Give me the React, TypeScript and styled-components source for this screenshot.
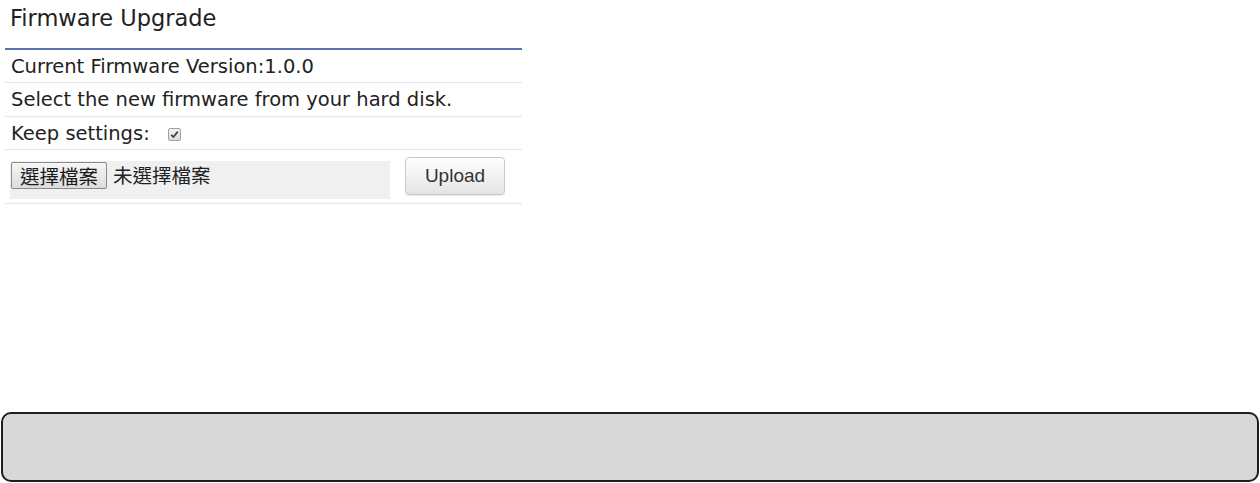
import React from "react";
import styled, { createGlobalStyle } from "styled-components";

const GlobalStyle = createGlobalStyle`
  html, body {
    margin: 0;
    padding: 0;
    background: #fff;
  }
  body {
    font-family: "DejaVu Sans", Verdana, sans-serif;
    color: #222;
  }
  * {
    box-sizing: border-box;
  }
`;

const Page = styled.div`
  display: flex;
  flex-direction: column;
  height: 100vh;
`;

const Panel = styled.div`
  width: 517px;
  margin-left: 5px;
`;

const Title = styled.div`
  height: 50px;
  padding: 4px 0 0 5px;
  font-size: 22.5px;
  line-height: 28px;
  color: #222;
  border-bottom: 2px solid #5a70b3;
`;

const Row = styled.div<{ $height: number }>`
  display: flex;
  align-items: center;
  gap: 18px;
  height: ${(p) => p.$height}px;
  padding-left: 6px;
  font-size: 19.5px;
  border-bottom: 1px solid #e6e6e6;
`;

const UploadRow = styled.div`
  display: flex;
  align-items: flex-start;
  gap: 15px;
  height: 54px;
  padding: 7px 0 0 5px;
  border-bottom: 1px solid #e6e6e6;
`;

const FileBox = styled.div`
  display: flex;
  align-items: flex-start;
  gap: 6px;
  width: 380px;
  height: 38px;
  margin-top: 4px;
  padding: 1px;
  background: #f0f0f0;
  font-family: "Noto Sans CJK TC", "DejaVu Sans", sans-serif;
  font-size: 19.5px;
  color: #222;
`;

const ChooseButton = styled.div`
  height: 27px;
  padding: 0 8px;
  line-height: 25px;
  border: 1px solid #8a8a8a;
  border-radius: 2px;
  background: linear-gradient(#f6f6f6, #dcdcdc);
  color: #1a1a1a;
`;

const FileName = styled.span`
  line-height: 25px;
`;

const UploadButton = styled.button`
  width: 100px;
  height: 38px;
  padding: 0;
  border: 1px solid #c8c8c8;
  border-radius: 4px;
  background: linear-gradient(#ffffff, #e4e4e4);
  box-shadow: 0 1px 1px rgba(0, 0, 0, 0.08);
  font-family: "Liberation Sans", Arial, sans-serif;
  font-size: 19px;
  color: #333;
`;

const Check = styled.span`
  display: inline-flex;
  align-items: center;
  justify-content: center;
  width: 13px;
  height: 13px;
  margin-top: 2px;
  border: 1px solid #a0a0a0;
  border-radius: 2px;
  background: linear-gradient(#f4f4f4, #dedede);
`;

const Footer = styled.div`
  height: 70px;
  margin: auto 1px 1px 1px;
  border: 2px solid #1e1e1e;
  border-radius: 10px;
  background: #d8d8d8;
`;

export default function App() {
  return (
    <>
      <GlobalStyle />
      <Page>
        <Panel>
          <Title>Firmware Upgrade</Title>
          <Row $height={33}>Current Firmware Version:1.0.0</Row>
          <Row $height={34}>Select the new firmware from your hard disk.</Row>
          <Row $height={33}>
            Keep settings:
            <Check>
              <svg width="9" height="9" viewBox="0 0 9 9">
                <path d="M1.2 4.8 L3.4 7 L7.8 1.6" fill="none" stroke="#444" strokeWidth="1.8" />
              </svg>
            </Check>
          </Row>
          <UploadRow>
            <FileBox>
              <ChooseButton>選擇檔案</ChooseButton>
              <FileName>未選擇檔案</FileName>
            </FileBox>
            <UploadButton>Upload</UploadButton>
          </UploadRow>
        </Panel>
        <Footer />
      </Page>
    </>
  );
}
